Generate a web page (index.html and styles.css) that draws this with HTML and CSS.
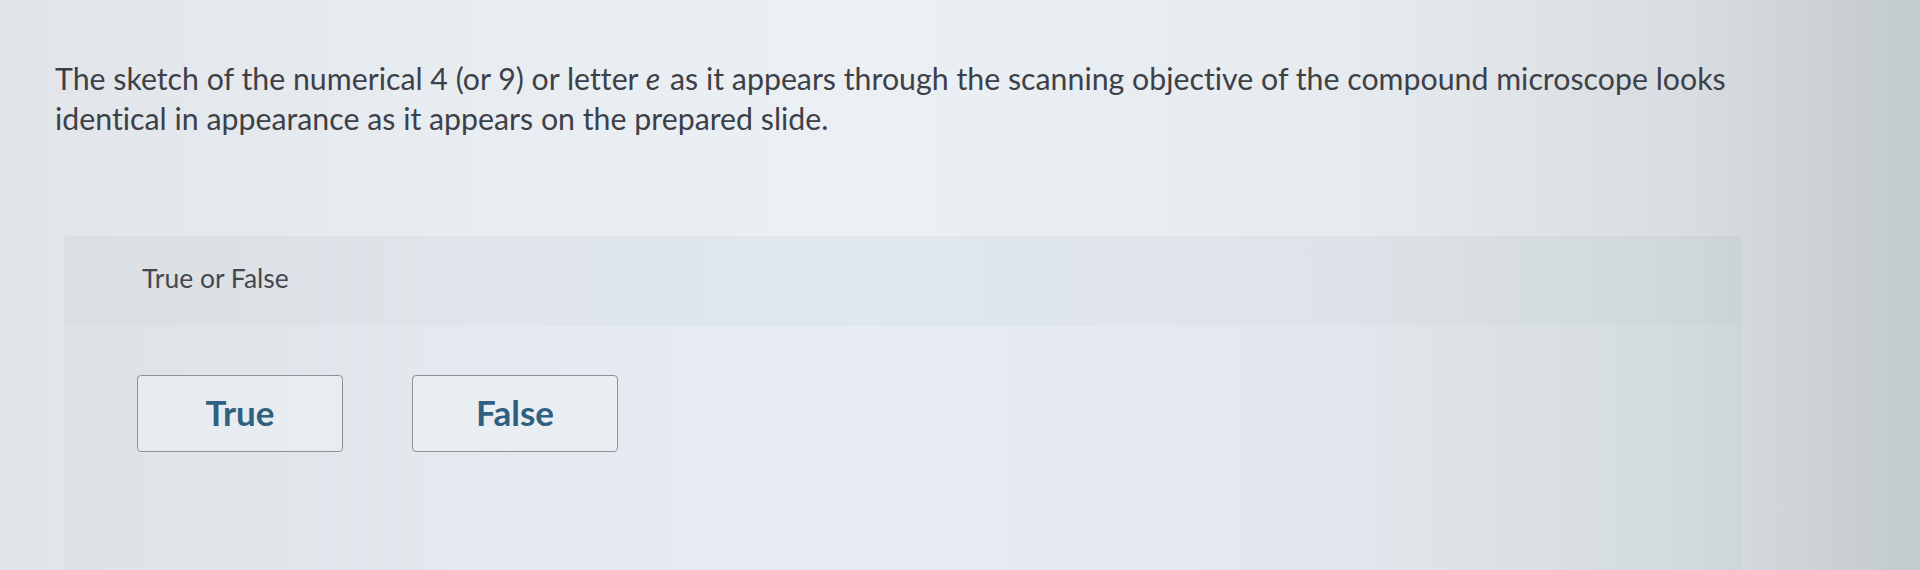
FILE: index.html
```html
<!DOCTYPE html>
<html lang="en">

<head>
    <meta charset="UTF-8">
    <meta name="viewport" content="width=device-width, initial-scale=1.0">
    <title>True or False</title>
    <link rel="stylesheet" href="styles.css">
</head>

<body>

    <div class="page">
        <!-- Question prompt -->
        <p class="question">
            The sketch of the numerical 4 (or 9) or letter <em>e</em> as it appears through the scanning objective of the compound microscope looks<br>
            identical in appearance as it appears on the prepared slide.
        </p>

        <!-- Answer panel -->
        <div class="answer-panel">
            <div class="answer-head">
                <span class="answer-label">True or False</span>
            </div>
            <div class="answer-choices">
                <button class="choice">True</button>
                <button class="choice">False</button>
            </div>
        </div>
    </div>

</body>

</html>
```

FILE: styles.css
```css
html, body {
    height: 100%;
}

body {
    margin: 0;
    padding: 0;
    font-family: Lato, "Open Sans", Arial, sans-serif;
    font-variant-ligatures: none;
    color: #3b3f45;
    background: linear-gradient(to right, #e1e5ea 0%, #e8edf2 25%, #ebf0f5 45%, #e6ebf0 70%, #d7dde1 88%, #c3cacb 100%);
    overflow: hidden;
}

.page {
    padding: 58px 0 0 55px;
    height: 100%;
    box-sizing: border-box;
}

.question {
    margin: 0;
    width: 1690px;
    font-size: 30.3px;
    line-height: 40px;
    color: #3d4147;
}

.question em {
    font-style: italic;
    padding-right: 2px;
}

.answer-panel {
    margin: 98px 0 0 9px;
    width: 1678px;
    height: 360px;
    background: rgba(120, 130, 145, 0.035);
    border-radius: 4px;
}

.answer-head {
    height: 90px;
    padding: 0 0 6px 78px;
    box-sizing: border-box;
    display: flex;
    align-items: center;
    background: rgba(120, 130, 145, 0.035);
}

.answer-label {
    font-size: 26.5px;
    color: #45494e;
}

.answer-choices {
    display: flex;
    gap: 69px;
    padding: 49px 0 0 73px;
}

.choice {
    width: 206px;
    height: 77px;
    padding-bottom: 4px;
    font-family: inherit;
    font-size: 35px;
    font-weight: bold;
    color: #30607f;
    background: rgba(240, 244, 247, 0.5);
    border: 1.5px solid #8c9298;
    border-radius: 4px;
    cursor: pointer;
}

.choice:hover {
    background: #f2f5f8;
}
```
